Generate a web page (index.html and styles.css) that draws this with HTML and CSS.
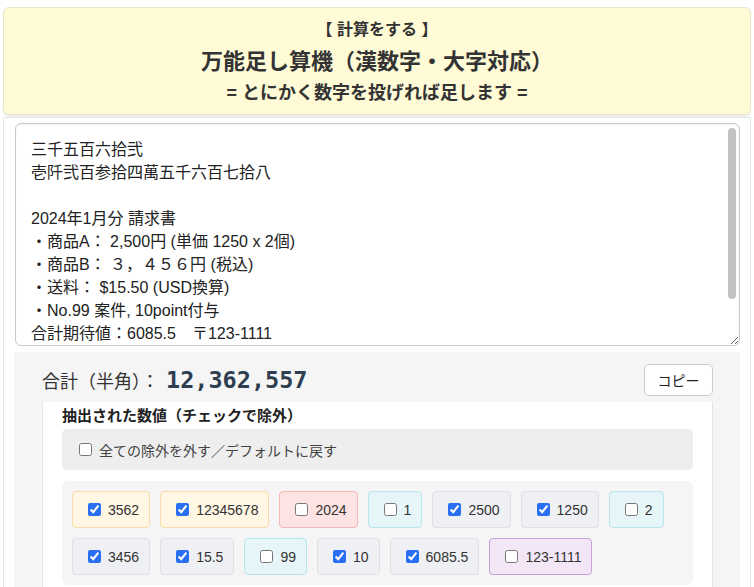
FILE: index.html
```html
<!DOCTYPE html>
<html lang="ja">

<head>
  <meta charset="UTF-8">
  <meta name="viewport" content="width=device-width, initial-scale=1.0">
  <title>万能足し算機（漢数字・大字対応）</title>
  <link rel="stylesheet" href="styles.css">
</head>

<body>
  <header class="title-box">
    <div class="title-sub">【 計算をする 】</div>
    <h1 class="title-main">万能足し算機（漢数字・大字対応）</h1>
    <div class="title-tag">= とにかく数字を投げれば足します =</div>
  </header>

  <div class="calc-panel">
    <div class="input-wrap">
      <textarea class="input-area" spellcheck="false">三千五百六拾弐
壱阡弐百参拾四萬五千六百七拾八

2024年1月分 請求書
・商品A： 2,500円 (単価 1250 x 2個)
・商品B： ３，４５６円 (税込)
・送料： $15.50 (USD換算)
・No.99 案件, 10point付与
合計期待値：6085.5　〒123-1111


</textarea>
      <!-- scroll thumb (headless hides the native one) -->
      <span class="scroll-thumb"></span>
    </div>

    <div class="result-area">
      <div class="sum-row">
        <div class="sum-text">
          <span class="sum-label">合計（半角）：</span><span class="sum-value">12,362,557</span>
        </div>
        <button class="copy-btn">コピー</button>
      </div>

      <div class="extract-box">
        <h2 class="extract-title">抽出された数値（チェックで除外）</h2>
        <label class="reset-toggle">
          <input type="checkbox"> 全ての除外を外す／デフォルトに戻す
        </label>

        <div class="chip-list">
          <label class="chip chip-kanji"><input type="checkbox" checked>3562</label>
          <label class="chip chip-kanji"><input type="checkbox" checked>12345678</label>
          <label class="chip chip-year"><input type="checkbox">2024</label>
          <label class="chip chip-small"><input type="checkbox">1</label>
          <label class="chip"><input type="checkbox" checked>2500</label>
          <label class="chip"><input type="checkbox" checked>1250</label>
          <label class="chip chip-small"><input type="checkbox">2</label>
          <label class="chip"><input type="checkbox" checked>3456</label>
          <label class="chip"><input type="checkbox" checked>15.5</label>
          <label class="chip chip-small"><input type="checkbox">99</label>
          <label class="chip"><input type="checkbox" checked>10</label>
          <label class="chip"><input type="checkbox" checked>6085.5</label>
          <label class="chip chip-code"><input type="checkbox">123-1111</label>
        </div>
      </div>
    </div>
  </div>
</body>

</html>
```

FILE: styles.css
```css
html {
  font-family: "Liberation Sans", "Noto Sans CJK JP", sans-serif;
  color: #333;
}

body {
  margin: 7px 3px 0;
  background-color: #fff;
}

/* header */
.title-box {
  background-color: #fffbd6;
  border: 1px solid #e9e5c6;
  border-radius: 6px;
  box-shadow: 0 2px 3px rgba(0, 0, 0, 0.08);
  padding: 10px 0 8px;
  text-align: center;
  font-weight: bold;
}

.title-sub {
  font-size: 16px;
  line-height: 24px;
}

.title-main {
  margin: 4px 0 0;
  font-size: 22px;
  line-height: 32px;
}

.title-tag {
  margin-top: 2px;
  font-size: 18px;
  line-height: 26px;
}

/* main panel */
.calc-panel {
  margin-top: 2px;
  border: 1px solid #e6e6e6;
  border-bottom: none;
  padding: 5px 10px 0 11px;
  min-height: 470px;
}

.input-wrap {
  position: relative;
}

.input-area {
  display: block;
  box-sizing: border-box;
  width: 100%;
  height: 223px;
  padding: 14px 15px;
  border: 1px solid #c9c9c9;
  border-radius: 6px;
  box-shadow: inset 0 1px 2px rgba(0, 0, 0, 0.05);
  font-family: "Liberation Sans", "Noto Sans CJK JP", sans-serif;
  font-size: 16px;
  line-height: 23px;
  color: #222;
  resize: vertical;
  outline: none;
}

.scroll-thumb {
  position: absolute;
  top: 5px;
  right: 4px;
  width: 8px;
  height: 171px;
  border-radius: 4px;
  background-color: #c2c2c2;
}

.result-area {
  margin-top: 6px;
  margin-left: -1px;
  background-color: #f5f5f5;
  padding: 12px 27px 0 28px;
}

.sum-row {
  display: flex;
  justify-content: space-between;
  align-items: center;
  margin-bottom: 6px;
}

.sum-text {
  display: flex;
  align-items: baseline;
}

.sum-label {
  font-size: 18px;
  color: #333;
}

.sum-value {
  margin-left: 7px;
  font-family: "DejaVu Sans Mono", "Liberation Mono", monospace;
  font-size: 23.5px;
  font-weight: bold;
  color: #2c3e50;
}

.copy-btn {
  width: 69px;
  height: 32px;
  background-color: #fff;
  border: 1px solid #ccc;
  border-radius: 5px;
  font-family: "Liberation Sans", "Noto Sans CJK JP", sans-serif;
  font-size: 14px;
  color: #222;
}

/* extracted numbers */
.extract-box {
  background-color: #fff;
  border-left: 1px solid #e4e4e4;
  border-right: 1px solid #e4e4e4;
  padding: 3px 19px 1px;
  min-height: 200px;
}

.extract-title {
  margin: 0 0 2px;
  font-size: 15px;
  line-height: 22px;
  color: #222;
}

.reset-toggle {
  display: flex;
  align-items: center;
  height: 41px;
  padding: 0 13px;
  background-color: #eee;
  border-radius: 5px;
  font-size: 14px;
  color: #444;
}

.reset-toggle input {
  margin: 0 7px 0 4px;
}

.chip-list {
  display: flex;
  flex-wrap: wrap;
  gap: 10px;
  margin-top: 11px;
  padding: 10px;
  background-color: #f5f5f6;
  border-radius: 6px;
}

.chip {
  display: inline-flex;
  align-items: center;
  box-sizing: border-box;
  height: 37px;
  padding: 0 10px 0 11px;
  background-color: #eff0f3;
  border: 1px solid #dfe0e6;
  border-radius: 4px;
  font-size: 14px;
  color: #333;
}

.chip input {
  margin: 0 7px 0 4px;
  accent-color: #2a6ff2;
}

.chip-kanji {
  background-color: #fff6e4;
  border-color: #f9dba9;
}

.chip-year {
  background-color: #fde3e3;
  border-color: #f3b8b8;
}

.chip-small {
  background-color: #e6f6f8;
  border-color: #b8e5ee;
}

.chip-code {
  background-color: #f3e6f6;
  border-color: #c9a1d9;
}
```
